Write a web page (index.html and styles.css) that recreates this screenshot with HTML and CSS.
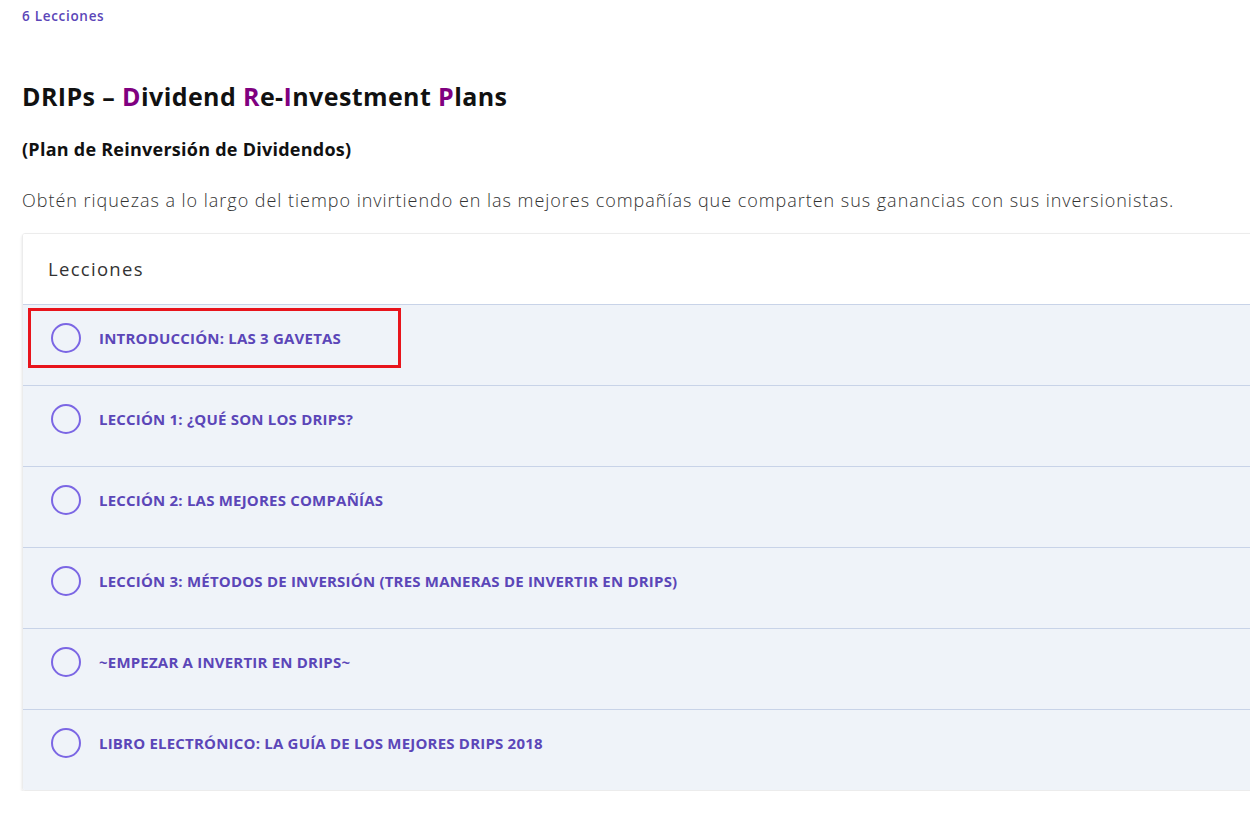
FILE: index.html
```html
<!DOCTYPE html>
<html lang="es">
<head>
    <meta charset="UTF-8">
    <meta name="viewport" content="width=device-width, initial-scale=1.0">
    <title>DRIPs – Lecciones</title>
    <link rel="stylesheet" href="styles.css">
</head>
<body>
    <div class="course">
        <div class="lesson-count">6 Lecciones</div>

        <h1 class="course-title">DRIPs – <span class="hl">D</span>ividend <span class="hl">R</span>e-<span class="hl">I</span>nvestment <span class="hl">P</span>lans</h1>
        <h2 class="course-subtitle">(Plan de Reinversión de Dividendos)</h2>
        <p class="course-desc">Obtén riquezas a lo largo del tiempo invirtiendo en las mejores compañías que comparten sus ganancias con sus inversionistas.</p>

        <div class="lessons-card">
            <div class="lessons-header">Lecciones</div>
            <ul class="lesson-list">
                <li class="lesson-row">
                    <a href="#" class="lesson-link is-marked"><span class="status-circle"></span><span>Introducción: Las 3 Gavetas</span></a>
                </li>
                <li class="lesson-row">
                    <a href="#" class="lesson-link"><span class="status-circle"></span><span>Lección 1: ¿Qué son los DRIPs?</span></a>
                </li>
                <li class="lesson-row">
                    <a href="#" class="lesson-link"><span class="status-circle"></span><span>Lección 2: Las mejores compañías</span></a>
                </li>
                <li class="lesson-row">
                    <a href="#" class="lesson-link"><span class="status-circle"></span><span>Lección 3: Métodos de Inversión (Tres maneras de invertir en DRIPs)</span></a>
                </li>
                <li class="lesson-row">
                    <a href="#" class="lesson-link"><span class="status-circle"></span><span>~Empezar a invertir en DRIPs~</span></a>
                </li>
                <li class="lesson-row">
                    <a href="#" class="lesson-link"><span class="status-circle"></span><span>Libro Electrónico: La Guía de los mejores DRIPs 2018</span></a>
                </li>
            </ul>
        </div>
    </div>
</body>
</html>
```

FILE: styles.css
```css
* { margin: 0; padding: 0; box-sizing: border-box; }
html, body { overflow: hidden; }
body { font-family: "Open Sans", "Liberation Sans", sans-serif; background-color: #fff; color: #333; }
.course { width: 1300px; padding: 0 0 0 22px; }
.lesson-count { font-size: 13.5px; font-weight: 600; color: #5b46b8; line-height: 16px; padding-top: 8px; letter-spacing: 0.7px; }
.course-title { font-size: 25px; font-weight: 700; color: #111; line-height: 32px; margin-top: 56px; letter-spacing: 0.4px; }
.course-title .hl { color: #800080; }
.course-subtitle { font-size: 18px; font-weight: 700; color: #111; line-height: 24px; margin-top: 25px; letter-spacing: 0.25px; }
.course-desc { font-size: 18px; font-weight: 300; color: #333; line-height: 26px; margin-top: 26px; letter-spacing: 0.97px; }
.lessons-card { margin-top: 20px; border: 1px solid #ececec; border-radius: 3px; box-shadow: 0 2px 3px rgba(0, 0, 0, 0.12); overflow: hidden; }
.lessons-header { height: 71px; padding: 22px 25px; font-size: 18.5px; font-weight: 500; color: #333; background: #fff; border-bottom: 1px solid #c8d3e8; line-height: 26px; letter-spacing: 1.3px; }
.lesson-list { list-style: none; }
.lesson-row { height: 81px; padding: 3px 0 0 5px; background: #eff3f9; border-bottom: 1px solid #c8d3e8; }
.lesson-row:last-child { border-bottom: none; height: 80px; }
.lesson-link { display: inline-flex; align-items: center; gap: 18px; height: 60px; padding: 0 19px 0 20px; border: 3px solid transparent; text-decoration: none; font-size: 15px; font-weight: 700; text-transform: uppercase; color: #5b46b8; letter-spacing: 0.2px; }
.lesson-link.is-marked { border-color: #e8141c; width: 373px; }
.status-circle { width: 30px; height: 30px; border: 2.5px solid #7b66e4; border-radius: 50%; flex: none; }
```
